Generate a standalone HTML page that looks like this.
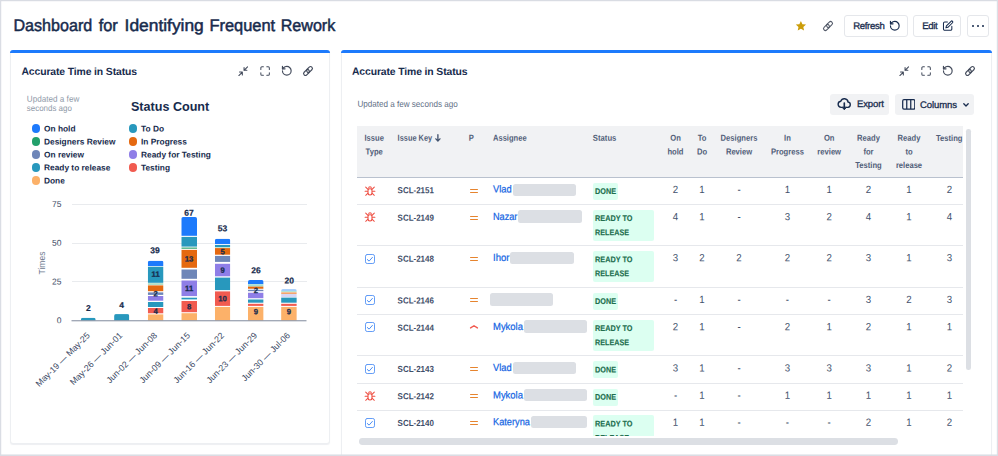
<!DOCTYPE html>
<html><head><meta charset="utf-8"><title>Dashboard for Identifying Frequent Rework</title>
<style>
html,body{margin:0;padding:0;background:#fff}
body{width:998px;height:456px;position:relative;overflow:hidden;font-family:"Liberation Sans",sans-serif}
.t{position:absolute;left:0;top:0;white-space:nowrap;display:block;transform-origin:0 0}
.tr{position:absolute;white-space:nowrap;display:block}
.r{position:absolute;display:block}
</style></head><body>
<span class="t" style="transform:translate(13.50px,15.01px) scale(0.9586,1) rotate(0.06deg);font-size:16.8px;line-height:22px;height:22px;color:#172b4d;-webkit-text-stroke:0.5px #172b4d;">Dashboard</span>
<span class="t" style="transform:translate(98.70px,15.04px) scale(0.9753,1) rotate(0.06deg);font-size:16.8px;line-height:22px;height:22px;color:#172b4d;-webkit-text-stroke:0.5px #172b4d;">for</span>
<span class="t" style="transform:translate(124.60px,15.00px) scale(1.0353,1) rotate(0.06deg);font-size:16.8px;line-height:22px;height:22px;color:#172b4d;-webkit-text-stroke:0.5px #172b4d;">Identifying</span>
<span class="t" style="transform:translate(209.50px,15.01px) scale(0.9782,1) rotate(0.06deg);font-size:16.8px;line-height:22px;height:22px;color:#172b4d;-webkit-text-stroke:0.5px #172b4d;">Frequent</span>
<span class="t" style="transform:translate(280.70px,15.02px) scale(0.9599,1) rotate(0.06deg);font-size:16.8px;line-height:22px;height:22px;color:#172b4d;-webkit-text-stroke:0.5px #172b4d;">Rework</span>
<svg class="r" style="left:794.90px;top:19.80px;" width="11.8" height="11.8" viewBox="0 0 24 24" fill="none"><path fill="#cb9d0a" d="M12 1.800l3.100 6.700 7.300.800-5.450 4.950 1.500 7.200L12 17.800l-6.450 3.650 1.500-7.200L1.600 9.300l7.300-.800z"/></svg>
<svg class="r" style="left:821.00px;top:18.60px;" width="14" height="14" viewBox="-7 -7 14 14" fill="none"><g stroke="#535a69" stroke-width="1.05" transform="scale(1.019) rotate(-45)"><rect x="-5.450" y="-1.850" width="6.700" height="3.700" rx="1.850"/><rect x="-1.250" y="-1.850" width="6.700" height="3.700" rx="1.850"/></g></svg>
<div class="r" style="left:844.4px;top:14.7px;width:63.6px;height:22px;box-sizing:border-box;border:1px solid #e5e7eb;border-radius:3px;background:#fff"></div>
<span class="t" style="transform:translate(853.20px,20.04px) rotate(0.06deg);font-size:9.6px;line-height:12px;height:12px;color:#172b4d;letter-spacing:-0.332px;-webkit-text-stroke:0.3px #172b4d;">Refresh</span>
<svg class="r" style="left:888.90px;top:19.90px;" width="11.6" height="11.6" viewBox="0 0 24 24" fill="none"><g stroke="#172b4d" stroke-width="2.4" stroke-linecap="round" stroke-linejoin="round"><path d="M3 12a9 9 0 1 0 9-9 9.750 9.750 0 0 0-6.740 2.740L3 8"/><path d="M3 2.600v5.400h5.400"/></g></svg>
<div class="r" style="left:913.1px;top:14.7px;width:48.4px;height:22px;box-sizing:border-box;border:1px solid #e5e7eb;border-radius:3px;background:#fff"></div>
<span class="t" style="transform:translate(922.30px,20.05px) rotate(0.06deg);font-size:9.6px;line-height:12px;height:12px;color:#172b4d;letter-spacing:-0.344px;-webkit-text-stroke:0.3px #172b4d;">Edit</span>
<svg class="r" style="left:941.90px;top:19.60px;" width="11.8" height="11.8" viewBox="0 0 24 24" fill="none"><g stroke="#172b4d" stroke-width="2.1" stroke-linecap="round" stroke-linejoin="round"><path d="M11 4H5.500A2.500 2.500 0 0 0 3 6.500v12A2.500 2.500 0 0 0 5.500 21h12a2.500 2.500 0 0 0 2.500-2.500V13"/><path d="M18.400 2.600a2.100 2.100 0 0 1 3 3L12 15l-4 1 1-4z"/></g></svg>
<div class="r" style="left:967.3px;top:14.7px;width:21.8px;height:22px;box-sizing:border-box;border:1px solid #e5e7eb;border-radius:3px;background:#fff"></div>
<div class="r" style="left:971.85px;top:24.85px;width:1.90px;height:1.90px;background:#172b4d;border-radius:50%"></div>
<div class="r" style="left:976.90px;top:24.85px;width:1.90px;height:1.90px;background:#172b4d;border-radius:50%"></div>
<div class="r" style="left:981.95px;top:24.85px;width:1.90px;height:1.90px;background:#172b4d;border-radius:50%"></div>
<div class="r" style="left:10px;top:50px;width:320.4px;height:394px;border:1px solid #edeff2;border-radius:3px;box-sizing:border-box;background:#fff;box-shadow:0 1px 1px rgba(9,30,66,.07)"></div>
<div class="r" style="left:10px;top:50px;width:320.4px;height:2.8px;background:#1d7afc;border-radius:3px 3px 0 0"></div>
<div class="r" style="left:340.7px;top:50px;width:651.6px;height:420px;border:1px solid #edeff2;border-radius:3px;box-sizing:border-box;background:#fff;box-shadow:0 1px 1px rgba(9,30,66,.07)"></div>
<div class="r" style="left:340.7px;top:50px;width:651.6px;height:2.8px;background:#1d7afc;border-radius:3px 3px 0 0"></div>
<span class="t" style="transform:translate(21.50px,64.86px) rotate(0.06deg);font-size:10.4px;line-height:14px;height:14px;color:#172b4d;font-weight:bold;letter-spacing:-0.122px;">Accurate Time in Status</span>
<span class="t" style="transform:translate(352.00px,64.86px) rotate(0.06deg);font-size:10.4px;line-height:14px;height:14px;color:#172b4d;font-weight:bold;letter-spacing:-0.122px;">Accurate Time in Status</span>
<svg class="r" style="left:237.80px;top:65.60px;" width="10.4" height="10.4" viewBox="0 0 24 24" fill="none"><g stroke="#434b5c" stroke-width="2.5" stroke-linecap="round" stroke-linejoin="round"><path d="M22 2l-8 8M14 3.5V10h6.5"/><path d="M2 22l8-8M3.500 14H10v6.5"/></g></svg>
<svg class="r" style="left:259.70px;top:65.70px;" width="10.2" height="10.2" viewBox="0 0 24 24" fill="none"><g stroke="#434b5c" stroke-width="2.4" stroke-linecap="round" stroke-linejoin="round"><path d="M2 8V4.500A2.500 2.500 0 0 1 4.500 2H8"/><path d="M16 2h3.500A2.500 2.500 0 0 1 22 4.500V8"/><path d="M22 16v3.500A2.500 2.500 0 0 1 19.500 22H16"/><path d="M8 22H4.500A2.500 2.500 0 0 1 2 19.500V16"/></g></svg>
<svg class="r" style="left:280.70px;top:64.90px;" width="11.6" height="11.6" viewBox="0 0 24 24" fill="none"><g stroke="#434b5c" stroke-width="2.4" stroke-linecap="round" stroke-linejoin="round"><path d="M3 12a9 9 0 1 0 9-9 9.750 9.750 0 0 0-6.740 2.740L3 8"/><path d="M3 2.600v5.400h5.400"/></g></svg>
<svg class="r" style="left:301.30px;top:63.80px;" width="14" height="14" viewBox="-7 -7 14 14" fill="none"><g stroke="#434b5c" stroke-width="1.15" transform="scale(1.000) rotate(-45)"><rect x="-5.450" y="-1.850" width="6.700" height="3.700" rx="1.850"/><rect x="-1.250" y="-1.850" width="6.700" height="3.700" rx="1.850"/></g></svg>
<svg class="r" style="left:899.20px;top:65.60px;" width="10.4" height="10.4" viewBox="0 0 24 24" fill="none"><g stroke="#434b5c" stroke-width="2.5" stroke-linecap="round" stroke-linejoin="round"><path d="M22 2l-8 8M14 3.5V10h6.5"/><path d="M2 22l8-8M3.500 14H10v6.5"/></g></svg>
<svg class="r" style="left:921.10px;top:65.70px;" width="10.2" height="10.2" viewBox="0 0 24 24" fill="none"><g stroke="#434b5c" stroke-width="2.4" stroke-linecap="round" stroke-linejoin="round"><path d="M2 8V4.500A2.500 2.500 0 0 1 4.500 2H8"/><path d="M16 2h3.500A2.500 2.500 0 0 1 22 4.500V8"/><path d="M22 16v3.500A2.500 2.500 0 0 1 19.500 22H16"/><path d="M8 22H4.500A2.500 2.500 0 0 1 2 19.500V16"/></g></svg>
<svg class="r" style="left:942.10px;top:64.90px;" width="11.6" height="11.6" viewBox="0 0 24 24" fill="none"><g stroke="#434b5c" stroke-width="2.4" stroke-linecap="round" stroke-linejoin="round"><path d="M3 12a9 9 0 1 0 9-9 9.750 9.750 0 0 0-6.740 2.740L3 8"/><path d="M3 2.600v5.400h5.400"/></g></svg>
<svg class="r" style="left:962.70px;top:63.80px;" width="14" height="14" viewBox="-7 -7 14 14" fill="none"><g stroke="#434b5c" stroke-width="1.15" transform="scale(1.000) rotate(-45)"><rect x="-5.450" y="-1.850" width="6.700" height="3.700" rx="1.850"/><rect x="-1.250" y="-1.850" width="6.700" height="3.700" rx="1.850"/></g></svg>
<span class="t" style="transform:translate(26.80px,93.67px) scale(0.9473,1) rotate(0.06deg);font-size:8.6px;line-height:11px;height:11px;color:#8f99a8;">Updated a few</span>
<span class="t" style="transform:translate(26.80px,102.88px) scale(0.9234,1) rotate(0.06deg);font-size:8.6px;line-height:11px;height:11px;color:#8f99a8;">seconds ago</span>
<span class="t" style="transform:translate(131.00px,98.65px) rotate(0.06deg);font-size:12.6px;line-height:16px;height:16px;color:#172b4d;font-weight:bold;letter-spacing:-0.014px;">Status Count</span>
<div class="r" style="left:31.60px;top:124.20px;width:8.80px;height:8.80px;background:#1d7afc;border-radius:50%"></div>
<span class="t" style="transform:translate(44.00px,123.48px) rotate(0.06deg);font-size:8.35px;line-height:11px;height:11px;color:#172b4d;font-weight:bold;">On hold</span>
<div class="r" style="left:31.60px;top:137.20px;width:8.80px;height:8.80px;background:#22a06b;border-radius:50%"></div>
<span class="t" style="transform:translate(44.00px,136.46px) rotate(0.06deg);font-size:8.35px;line-height:11px;height:11px;color:#172b4d;font-weight:bold;">Designers Review</span>
<div class="r" style="left:31.60px;top:150.20px;width:8.80px;height:8.80px;background:#6e86b8;border-radius:50%"></div>
<span class="t" style="transform:translate(44.00px,149.47px) rotate(0.06deg);font-size:8.35px;line-height:11px;height:11px;color:#172b4d;font-weight:bold;">On review</span>
<div class="r" style="left:31.60px;top:163.10px;width:8.80px;height:8.80px;background:#2898bd;border-radius:50%"></div>
<span class="t" style="transform:translate(44.00px,162.36px) rotate(0.06deg);font-size:8.35px;line-height:11px;height:11px;color:#172b4d;font-weight:bold;">Ready to release</span>
<div class="r" style="left:31.60px;top:176.10px;width:8.80px;height:8.80px;background:#fcb169;border-radius:50%"></div>
<span class="t" style="transform:translate(44.00px,175.38px) rotate(0.06deg);font-size:8.35px;line-height:11px;height:11px;color:#172b4d;font-weight:bold;">Done</span>
<div class="r" style="left:128.60px;top:124.20px;width:8.80px;height:8.80px;background:#2898bd;border-radius:50%"></div>
<span class="t" style="transform:translate(141.00px,123.48px) rotate(0.06deg);font-size:8.35px;line-height:11px;height:11px;color:#172b4d;font-weight:bold;">To Do</span>
<div class="r" style="left:128.60px;top:137.20px;width:8.80px;height:8.80px;background:#e56910;border-radius:50%"></div>
<span class="t" style="transform:translate(141.00px,136.47px) rotate(0.06deg);font-size:8.35px;line-height:11px;height:11px;color:#172b4d;font-weight:bold;">In Progress</span>
<div class="r" style="left:128.60px;top:150.20px;width:8.80px;height:8.80px;background:#8f7ee7;border-radius:50%"></div>
<span class="t" style="transform:translate(141.00px,149.46px) rotate(0.06deg);font-size:8.35px;line-height:11px;height:11px;color:#172b4d;font-weight:bold;">Ready for Testing</span>
<div class="r" style="left:128.60px;top:163.10px;width:8.80px;height:8.80px;background:#f15b50;border-radius:50%"></div>
<span class="t" style="transform:translate(141.00px,162.38px) rotate(0.06deg);font-size:8.35px;line-height:11px;height:11px;color:#172b4d;font-weight:bold;">Testing</span>
<div class="r" style="left:71.50px;top:204.00px;width:235.00px;height:1.00px;background:#e9ebee;"></div>
<div class="r" style="left:71.50px;top:242.70px;width:235.00px;height:1.00px;background:#e9ebee;"></div>
<div class="r" style="left:71.50px;top:281.40px;width:235.00px;height:1.00px;background:#e9ebee;"></div>
<span class="t" style="transform:translate(52.00px,199.03px) rotate(0.06deg);font-size:8.5px;line-height:11px;height:11px;color:#3d4b66;">75</span>
<span class="t" style="transform:translate(52.00px,237.73px) rotate(0.06deg);font-size:8.5px;line-height:11px;height:11px;color:#3d4b66;">50</span>
<span class="t" style="transform:translate(52.00px,276.43px) rotate(0.06deg);font-size:8.5px;line-height:11px;height:11px;color:#3d4b66;">25</span>
<span class="t" style="transform:translate(56.72px,315.13px) rotate(0.06deg);font-size:8.5px;line-height:11px;height:11px;color:#3d4b66;">0</span>
<span class="tr" style="left:42.3px;top:262.5px;transform-origin:50% 50%;font-size:8.5px;line-height:10px;color:#6f7b90;transform:translate(-50%,-50%) rotate(-90deg)">Times</span>
<svg class="r" style="left:0;top:0" width="340" height="456" viewBox="0 0 340 456"><clipPath id="cb0"><rect x="80.9" y="317.7" width="14.80" height="12.30" rx="1.800"/></clipPath><g clip-path="url(#cb0)"><rect x="80.9" y="317.7" width="14.80" height="2.90" fill="#2898bd"/></g><clipPath id="cb1"><rect x="114.1" y="314.1" width="15.20" height="15.90" rx="1.800"/></clipPath><g clip-path="url(#cb1)"><rect x="114.1" y="314.1" width="15.20" height="6.50" fill="#2898bd"/></g><clipPath id="cb2"><rect x="147.8" y="260.7" width="15.70" height="69.30" rx="1.800"/></clipPath><g clip-path="url(#cb2)"><rect x="147.8" y="260.7" width="15.70" height="5.30" fill="#1d7afc"/><rect x="147.8" y="266.7" width="15.70" height="16.10" fill="#2898bd"/><rect x="147.8" y="283.2" width="15.70" height="1.70" fill="#a9dcc3"/><rect x="147.8" y="285.4" width="15.70" height="5.80" fill="#e56910"/><rect x="147.8" y="292.4" width="15.70" height="2.50" fill="#6e86b8"/><rect x="147.8" y="296.0" width="15.70" height="4.70" fill="#8f7ee7"/><rect x="147.8" y="302.0" width="15.70" height="5.00" fill="#2898bd"/><rect x="147.8" y="308.0" width="15.70" height="5.30" fill="#f15b50"/><rect x="147.8" y="314.4" width="15.70" height="6.20" fill="#fcb169"/></g><clipPath id="cb3"><rect x="181.3" y="217.0" width="15.70" height="113.00" rx="1.800"/></clipPath><g clip-path="url(#cb3)"><rect x="181.3" y="217.0" width="15.70" height="18.80" fill="#1d7afc"/><rect x="181.3" y="236.9" width="15.70" height="9.70" fill="#2898bd"/><rect x="181.3" y="247.5" width="15.70" height="1.30" fill="#3dab7c"/><rect x="181.3" y="249.9" width="15.70" height="17.90" fill="#e56910"/><rect x="181.3" y="269.5" width="15.70" height="9.30" fill="#6e86b8"/><rect x="181.3" y="280.5" width="15.70" height="15.60" fill="#8f7ee7"/><rect x="181.3" y="297.7" width="15.70" height="1.70" fill="#2898bd"/><rect x="181.3" y="301.0" width="15.70" height="11.20" fill="#f15b50"/><rect x="181.3" y="313.2" width="15.70" height="7.40" fill="#fcb169"/></g><clipPath id="cb4"><rect x="214.9" y="238.7" width="15.40" height="91.30" rx="1.800"/></clipPath><g clip-path="url(#cb4)"><rect x="214.9" y="238.7" width="15.40" height="5.40" fill="#1d7afc"/><rect x="214.9" y="245.0" width="15.40" height="2.00" fill="#2898bd"/><rect x="214.9" y="247.2" width="15.40" height="0.70" fill="#a9dcc3"/><rect x="214.9" y="248.1" width="15.40" height="6.60" fill="#e56910"/><rect x="214.9" y="255.9" width="15.40" height="6.00" fill="#6e86b8"/><rect x="214.9" y="263.8" width="15.40" height="12.50" fill="#8f7ee7"/><rect x="214.9" y="277.6" width="15.40" height="12.50" fill="#2898bd"/><rect x="214.9" y="291.4" width="15.40" height="14.50" fill="#f15b50"/><rect x="214.9" y="306.9" width="15.40" height="13.70" fill="#fcb169"/></g><clipPath id="cb5"><rect x="248.0" y="280.0" width="15.60" height="50.00" rx="1.800"/></clipPath><g clip-path="url(#cb5)"><rect x="248.0" y="280.0" width="15.60" height="4.20" fill="#1d7afc"/><rect x="248.0" y="284.3" width="15.60" height="2.30" fill="#a6e0d0"/><rect x="248.0" y="286.6" width="15.60" height="2.20" fill="#e56910"/><rect x="248.0" y="288.9" width="15.60" height="1.00" fill="#dfe4ee"/><rect x="248.0" y="290.0" width="15.60" height="1.10" fill="#6e86b8"/><rect x="248.0" y="291.2" width="15.60" height="1.50" fill="#e4e2f7"/><rect x="248.0" y="292.9" width="15.60" height="5.30" fill="#8f7ee7"/><rect x="248.0" y="299.5" width="15.60" height="3.20" fill="#2898bd"/><rect x="248.0" y="303.8" width="15.60" height="2.10" fill="#f15b50"/><rect x="248.0" y="306.9" width="15.60" height="13.70" fill="#fcb169"/></g><clipPath id="cb6"><rect x="281.1" y="289.1" width="15.70" height="40.90" rx="1.800"/></clipPath><g clip-path="url(#cb6)"><rect x="281.1" y="289.1" width="15.70" height="1.90" fill="#a3cdfb"/><rect x="281.1" y="291.0" width="15.70" height="1.10" fill="#b6e3d4"/><rect x="281.1" y="292.3" width="15.70" height="1.70" fill="#f3a56e"/><rect x="281.1" y="294.0" width="15.70" height="3.00" fill="#d8d6f5"/><rect x="281.1" y="297.6" width="15.70" height="5.10" fill="#2898bd"/><rect x="281.1" y="303.8" width="15.70" height="2.10" fill="#f15b50"/><rect x="281.1" y="306.9" width="15.70" height="13.70" fill="#fcb169"/></g><rect x="71.500" y="320.200" width="235" height="1.100" fill="#8c95a6"/></svg>
<span class="t" style="transform:translate(85.94px,302.09px) rotate(0.06deg);font-size:8.5px;line-height:12px;height:12px;color:#172b4d;font-weight:bold;-webkit-text-stroke:0.2px #172b4d;">2</span>
<span class="t" style="transform:translate(119.34px,298.89px) rotate(0.06deg);font-size:8.5px;line-height:12px;height:12px;color:#172b4d;font-weight:bold;-webkit-text-stroke:0.2px #172b4d;">4</span>
<span class="t" style="transform:translate(150.17px,244.19px) rotate(0.06deg);font-size:8.5px;line-height:12px;height:12px;color:#172b4d;font-weight:bold;-webkit-text-stroke:0.2px #172b4d;">39</span>
<span class="t" style="transform:translate(184.37px,206.69px) rotate(0.06deg);font-size:8.5px;line-height:12px;height:12px;color:#172b4d;font-weight:bold;-webkit-text-stroke:0.2px #172b4d;">67</span>
<span class="t" style="transform:translate(217.87px,222.34px) rotate(0.06deg);font-size:8.5px;line-height:12px;height:12px;color:#172b4d;font-weight:bold;-webkit-text-stroke:0.2px #172b4d;">53</span>
<span class="t" style="transform:translate(251.27px,264.34px) rotate(0.06deg);font-size:8.5px;line-height:12px;height:12px;color:#172b4d;font-weight:bold;-webkit-text-stroke:0.2px #172b4d;">26</span>
<span class="t" style="transform:translate(284.52px,274.39px) rotate(0.06deg);font-size:8.5px;line-height:12px;height:12px;color:#172b4d;font-weight:bold;-webkit-text-stroke:0.2px #172b4d;">20</span>
<span class="t" style="transform:translate(151.54px,269.63px) rotate(0.06deg);font-size:7.7px;line-height:10px;height:10px;color:#172b4d;font-weight:bold;-webkit-text-stroke:0.25px #172b4d;">11</span>
<span class="t" style="transform:translate(153.56px,289.23px) rotate(0.06deg);font-size:7.7px;line-height:10px;height:10px;color:#172b4d;font-weight:bold;-webkit-text-stroke:0.25px #172b4d;">2</span>
<span class="t" style="transform:translate(153.56px,306.83px) rotate(0.06deg);font-size:7.7px;line-height:10px;height:10px;color:#172b4d;font-weight:bold;-webkit-text-stroke:0.25px #172b4d;">4</span>
<span class="t" style="transform:translate(184.82px,254.43px) rotate(0.06deg);font-size:7.7px;line-height:10px;height:10px;color:#172b4d;font-weight:bold;-webkit-text-stroke:0.25px #172b4d;">13</span>
<span class="t" style="transform:translate(185.04px,283.93px) rotate(0.06deg);font-size:7.7px;line-height:10px;height:10px;color:#172b4d;font-weight:bold;-webkit-text-stroke:0.25px #172b4d;">11</span>
<span class="t" style="transform:translate(186.96px,302.23px) rotate(0.06deg);font-size:7.7px;line-height:10px;height:10px;color:#172b4d;font-weight:bold;-webkit-text-stroke:0.25px #172b4d;">8</span>
<span class="t" style="transform:translate(220.46px,247.13px) rotate(0.06deg);font-size:7.7px;line-height:10px;height:10px;color:#172b4d;font-weight:bold;-webkit-text-stroke:0.25px #172b4d;">5</span>
<span class="t" style="transform:translate(220.46px,265.63px) rotate(0.06deg);font-size:7.7px;line-height:10px;height:10px;color:#172b4d;font-weight:bold;-webkit-text-stroke:0.25px #172b4d;">9</span>
<span class="t" style="transform:translate(218.32px,294.23px) rotate(0.06deg);font-size:7.7px;line-height:10px;height:10px;color:#172b4d;font-weight:bold;-webkit-text-stroke:0.25px #172b4d;">10</span>
<span class="t" style="transform:translate(253.66px,285.93px) rotate(0.06deg);font-size:7.7px;line-height:10px;height:10px;color:#172b4d;font-weight:bold;-webkit-text-stroke:0.25px #172b4d;">2</span>
<span class="t" style="transform:translate(253.76px,307.13px) rotate(0.06deg);font-size:7.7px;line-height:10px;height:10px;color:#172b4d;font-weight:bold;-webkit-text-stroke:0.25px #172b4d;">9</span>
<span class="t" style="transform:translate(286.86px,307.13px) rotate(0.06deg);font-size:7.7px;line-height:10px;height:10px;color:#172b4d;font-weight:bold;-webkit-text-stroke:0.25px #172b4d;">9</span>
<span class="tr" style="right:910.10px;top:328.50px;font-size:8.8px;line-height:10px;color:#3d4b66;transform-origin:100% 50%;transform:rotate(-45deg)">May-19 — May-25</span>
<span class="tr" style="right:876.70px;top:328.50px;font-size:8.8px;line-height:10px;color:#3d4b66;transform-origin:100% 50%;transform:rotate(-45deg)">May-26 — Jun-01</span>
<span class="tr" style="right:842.80px;top:328.50px;font-size:8.8px;line-height:10px;color:#3d4b66;transform-origin:100% 50%;transform:rotate(-45deg)">Jun-02 — Jun-08</span>
<span class="tr" style="right:809.30px;top:328.50px;font-size:8.8px;line-height:10px;color:#3d4b66;transform-origin:100% 50%;transform:rotate(-45deg)">Jun-09 — Jun-15</span>
<span class="tr" style="right:775.80px;top:328.50px;font-size:8.8px;line-height:10px;color:#3d4b66;transform-origin:100% 50%;transform:rotate(-45deg)">Jun-16 — Jun-22</span>
<span class="tr" style="right:742.50px;top:328.50px;font-size:8.8px;line-height:10px;color:#3d4b66;transform-origin:100% 50%;transform:rotate(-45deg)">Jun-23 — Jun-29</span>
<span class="tr" style="right:709.40px;top:328.50px;font-size:8.8px;line-height:10px;color:#3d4b66;transform-origin:100% 50%;transform:rotate(-45deg)">Jun-30 — Jul-06</span>
<span class="t" style="transform:translate(357.40px,98.85px) scale(0.9197,1) rotate(0.06deg);font-size:8.8px;line-height:11px;height:11px;color:#626f86;">Updated a few seconds ago</span>
<div class="r" style="left:829.80px;top:93.90px;width:59.60px;height:21.40px;background:#f1f2f4;border-radius:3px"></div>
<div class="r" style="left:895.20px;top:93.90px;width:78.90px;height:21.40px;background:#f1f2f4;border-radius:3px"></div>
<svg class="r" style="left:836.60px;top:97.30px;" width="14.6" height="14.6" viewBox="0 0 24 24" fill="none"><g stroke="#172b4d" stroke-width="2.300" stroke-linecap="round" stroke-linejoin="round"><path d="M8.300 17H7A5 5 0 0 1 6.200 7.050 6.200 6.200 0 0 1 18.200 8.300 4.400 4.400 0 0 1 18 17h-2.300"/><path d="M12 9.800v8.700" stroke-width="2.700"/><path d="M8.700 17.200L12 21l3.300-3.800z" fill="#172b4d" stroke-width="1.600"/></g></svg>
<span class="t" style="transform:translate(856.90px,98.04px) rotate(0.06deg);font-size:9.5px;line-height:12px;height:12px;color:#172b4d;letter-spacing:-0.091px;-webkit-text-stroke:0.3px #172b4d;">Export</span>
<svg class="r" style="left:901.70px;top:99.00px;" width="13.5" height="10.8" viewBox="0 0 27 21.600" fill="none"><g stroke="#172b4d" stroke-width="2.500" stroke-linejoin="round"><rect x="1.400" y="1.400" width="24.200" height="18.800" rx="2.500"/><path d="M9.500 1.400v18.800M17.500 1.400v18.800"/></g></svg>
<span class="t" style="transform:translate(920.00px,98.94px) rotate(0.06deg);font-size:9.5px;line-height:12px;height:12px;color:#172b4d;letter-spacing:-0.081px;-webkit-text-stroke:0.3px #172b4d;">Columns</span>
<svg class="r" style="left:963.00px;top:102.70px;" width="6.0" height="3.9" viewBox="0 0 12 7.800" fill="none"><path d="M1.600 1.600L6 6l4.400-4.400" stroke="#172b4d" stroke-width="2.600" stroke-linecap="round" stroke-linejoin="round"/></svg>
<div class="r" style="left:357.20px;top:126.30px;width:606.00px;height:51.00px;background:#f1f2f4;"></div>
<div class="r" style="left:357.20px;top:176.95px;width:606.00px;height:1.20px;background:#b9c1ce;"></div>
<span class="t" style="transform:translate(364.48px,132.79px) scale(0.8850,1) rotate(0.06deg);font-size:8.6px;line-height:11px;height:11px;color:#526079;font-weight:bold;">Issue</span>
<span class="t" style="transform:translate(365.61px,146.44px) scale(0.8850,1) rotate(0.06deg);font-size:8.6px;line-height:11px;height:11px;color:#526079;font-weight:bold;">Type</span>
<span class="t" style="transform:translate(397.60px,132.78px) scale(0.8622,1) rotate(0.06deg);font-size:8.6px;line-height:11px;height:11px;color:#526079;font-weight:bold;">Issue Key</span>
<svg class="r" style="left:435.30px;top:134.10px;" width="5.8" height="8" viewBox="0 0 11.600 16" fill="none"><path d="M5.800 1.500v12.400M1.700 9.700l4.100 4.200 4.100-4.200" stroke="#44546f" stroke-width="2.700" stroke-linecap="round" stroke-linejoin="round"/></svg>
<span class="t" style="transform:translate(468.70px,132.80px) scale(0.8850,1) rotate(0.06deg);font-size:8.6px;line-height:11px;height:11px;color:#526079;font-weight:bold;">P</span>
<span class="t" style="transform:translate(493.00px,132.78px) scale(0.8793,1) rotate(0.06deg);font-size:8.6px;line-height:11px;height:11px;color:#526079;font-weight:bold;">Assignee</span>
<span class="t" style="transform:translate(592.80px,132.79px) scale(0.8986,1) rotate(0.06deg);font-size:8.6px;line-height:11px;height:11px;color:#526079;font-weight:bold;">Status</span>
<span class="t" style="transform:translate(670.22px,132.79px) scale(0.8850,1) rotate(0.06deg);font-size:8.6px;line-height:11px;height:11px;color:#526079;font-weight:bold;">On</span>
<span class="t" style="transform:translate(667.47px,146.44px) scale(0.8850,1) rotate(0.06deg);font-size:8.6px;line-height:11px;height:11px;color:#526079;font-weight:bold;">hold</span>
<span class="t" style="transform:translate(697.64px,132.80px) scale(0.8850,1) rotate(0.06deg);font-size:8.6px;line-height:11px;height:11px;color:#526079;font-weight:bold;">To</span>
<span class="t" style="transform:translate(696.93px,146.44px) scale(0.8850,1) rotate(0.06deg);font-size:8.6px;line-height:11px;height:11px;color:#526079;font-weight:bold;">Do</span>
<span class="t" style="transform:translate(720.61px,132.78px) scale(0.8850,1) rotate(0.06deg);font-size:8.6px;line-height:11px;height:11px;color:#526079;font-weight:bold;">Designers</span>
<span class="t" style="transform:translate(725.89px,146.44px) scale(0.8850,1) rotate(0.06deg);font-size:8.6px;line-height:11px;height:11px;color:#526079;font-weight:bold;">Review</span>
<span class="t" style="transform:translate(784.02px,132.80px) scale(0.8850,1) rotate(0.06deg);font-size:8.6px;line-height:11px;height:11px;color:#526079;font-weight:bold;">In</span>
<span class="t" style="transform:translate(770.91px,146.43px) scale(0.8850,1) rotate(0.06deg);font-size:8.6px;line-height:11px;height:11px;color:#526079;font-weight:bold;">Progress</span>
<span class="t" style="transform:translate(823.92px,132.79px) scale(0.8850,1) rotate(0.06deg);font-size:8.6px;line-height:11px;height:11px;color:#526079;font-weight:bold;">On</span>
<span class="t" style="transform:translate(817.36px,146.44px) scale(0.8850,1) rotate(0.06deg);font-size:8.6px;line-height:11px;height:11px;color:#526079;font-weight:bold;">review</span>
<span class="t" style="transform:translate(857.09px,132.79px) scale(0.8850,1) rotate(0.06deg);font-size:8.6px;line-height:11px;height:11px;color:#526079;font-weight:bold;">Ready</span>
<span class="t" style="transform:translate(863.43px,146.44px) scale(0.8850,1) rotate(0.06deg);font-size:8.6px;line-height:11px;height:11px;color:#526079;font-weight:bold;">for</span>
<span class="t" style="transform:translate(855.26px,160.09px) scale(0.8850,1) rotate(0.06deg);font-size:8.6px;line-height:11px;height:11px;color:#526079;font-weight:bold;">Testing</span>
<span class="t" style="transform:translate(897.59px,132.79px) scale(0.8850,1) rotate(0.06deg);font-size:8.6px;line-height:11px;height:11px;color:#526079;font-weight:bold;">Ready</span>
<span class="t" style="transform:translate(905.41px,146.45px) scale(0.8850,1) rotate(0.06deg);font-size:8.6px;line-height:11px;height:11px;color:#526079;font-weight:bold;">to</span>
<span class="t" style="transform:translate(895.89px,160.09px) scale(0.8850,1) rotate(0.06deg);font-size:8.6px;line-height:11px;height:11px;color:#526079;font-weight:bold;">release</span>
<div class="r" style="left:930px;top:126px;width:33.2px;height:51px;overflow:hidden"><span class="tr" style="left:5.9px;top:6.60px;font-size:8.6px;line-height:11px;font-weight:bold;color:#526079;transform-origin:0 0;transform:scale(0.885,1) rotate(0.06deg)">Testing</span></div>
<div class="r" style="left:0;top:177.5px;width:998px;height:258.6px;overflow:hidden"><div class="r" style="left:0;top:-177.5px;width:998px;height:456px">
<div class="r" style="left:357.20px;top:203.95px;width:606.00px;height:1.00px;background:#e6e8ec;"></div>
<svg class="r" style="left:363.85px;top:184.50px;" width="12" height="12" viewBox="-6 -6 12 12" fill="none"><g stroke="#ee4f43" stroke-width="1.050" stroke-linecap="round" fill="none"><rect x="-2" y="-2.300" width="4" height="6.300" rx="2"/><path d="M-1.350 -2.700a1.350 1.600 0 0 1 2.700 0"/><path d="M-2.400 0.300H-4.900M2.400 0.300H4.900M-2 -1.600L-4.300 -3.900M2 -1.600L4.300 -3.900M-2 2.200L-4.300 4.300M2 2.200L4.300 4.300"/></g></svg>
<span class="t" style="transform:translate(397.60px,185.33px) scale(0.9054,1) rotate(0.06deg);font-size:8.8px;line-height:11px;height:11px;color:#3f4e69;font-weight:bold;">SCL-2151</span>
<div class="r" style="left:469.60px;top:189.00px;width:8.50px;height:1.35px;background:#e6842f;border-radius:.5px"></div>
<div class="r" style="left:469.60px;top:192.00px;width:8.50px;height:1.35px;background:#e6842f;border-radius:.5px"></div>
<span class="t" style="transform:translate(493.00px,182.49px) scale(0.9025,1) rotate(0.06deg);font-size:10.3px;line-height:13px;height:13px;color:#1264e3;-webkit-text-stroke:0.22px #1264e3;">Vlad</span>
<div class="r" style="left:512.50px;top:183.50px;width:63.30px;height:12.50px;background:#dcdfe4;border-radius:2.500px"></div>
<div class="r" style="left:592.90px;top:182.70px;width:25.30px;height:17.10px;background:#dcfff1;border-radius:2px"></div>
<span class="t" style="transform:translate(595.00px,185.88px) scale(0.8679,1) rotate(0.06deg);font-size:8.4px;line-height:11px;height:11px;color:#216e4e;font-weight:bold;-webkit-text-stroke:0.15px #216e4e;">DONE</span>
<span class="t" style="transform:translate(672.81px,183.12px) scale(0.9300,1) rotate(0.06deg);font-size:10.4px;line-height:14px;height:14px;color:#42516c;">2</span>
<span class="t" style="transform:translate(699.31px,183.12px) scale(0.9300,1) rotate(0.06deg);font-size:10.4px;line-height:14px;height:14px;color:#42516c;">1</span>
<span class="t" style="transform:translate(737.39px,183.12px) scale(0.9300,1) rotate(0.06deg);font-size:10.4px;line-height:14px;height:14px;color:#42516c;">-</span>
<span class="t" style="transform:translate(784.71px,183.12px) scale(0.9300,1) rotate(0.06deg);font-size:10.4px;line-height:14px;height:14px;color:#42516c;">1</span>
<span class="t" style="transform:translate(826.51px,183.12px) scale(0.9300,1) rotate(0.06deg);font-size:10.4px;line-height:14px;height:14px;color:#42516c;">1</span>
<span class="t" style="transform:translate(865.81px,183.12px) scale(0.9300,1) rotate(0.06deg);font-size:10.4px;line-height:14px;height:14px;color:#42516c;">2</span>
<span class="t" style="transform:translate(906.31px,183.12px) scale(0.9300,1) rotate(0.06deg);font-size:10.4px;line-height:14px;height:14px;color:#42516c;">1</span>
<span class="t" style="transform:translate(946.71px,183.12px) scale(0.9300,1) rotate(0.06deg);font-size:10.4px;line-height:14px;height:14px;color:#42516c;">2</span>
<div class="r" style="left:357.20px;top:245.00px;width:606.00px;height:1.00px;background:#e6e8ec;"></div>
<svg class="r" style="left:363.85px;top:211.45px;" width="12" height="12" viewBox="-6 -6 12 12" fill="none"><g stroke="#ee4f43" stroke-width="1.050" stroke-linecap="round" fill="none"><rect x="-2" y="-2.300" width="4" height="6.300" rx="2"/><path d="M-1.350 -2.700a1.350 1.600 0 0 1 2.700 0"/><path d="M-2.400 0.300H-4.900M2.400 0.300H4.900M-2 -1.600L-4.300 -3.900M2 -1.600L4.300 -3.900M-2 2.200L-4.300 4.300M2 2.200L4.300 4.300"/></g></svg>
<span class="t" style="transform:translate(397.60px,212.73px) scale(0.9054,1) rotate(0.06deg);font-size:8.8px;line-height:11px;height:11px;color:#3f4e69;font-weight:bold;">SCL-2149</span>
<div class="r" style="left:469.60px;top:216.00px;width:8.50px;height:1.35px;background:#e6842f;border-radius:.5px"></div>
<div class="r" style="left:469.60px;top:219.00px;width:8.50px;height:1.35px;background:#e6842f;border-radius:.5px"></div>
<span class="t" style="transform:translate(493.00px,209.94px) scale(0.8883,1) rotate(0.06deg);font-size:10.3px;line-height:13px;height:13px;color:#1264e3;-webkit-text-stroke:0.22px #1264e3;">Nazar</span>
<div class="r" style="left:518.30px;top:210.45px;width:63.30px;height:12.50px;background:#dcdfe4;border-radius:2.500px"></div>
<div class="r" style="left:592.90px;top:209.55px;width:61.20px;height:31.35px;background:#dcfff1;border-radius:2px"></div>
<span class="t" style="transform:translate(595.00px,213.08px) scale(0.8719,1) rotate(0.06deg);font-size:8.4px;line-height:11px;height:11px;color:#216e4e;font-weight:bold;-webkit-text-stroke:0.15px #216e4e;">READY TO</span>
<span class="t" style="transform:translate(595.00px,227.28px) scale(0.8595,1) rotate(0.06deg);font-size:8.4px;line-height:11px;height:11px;color:#216e4e;font-weight:bold;-webkit-text-stroke:0.15px #216e4e;">RELEASE</span>
<span class="t" style="transform:translate(672.81px,210.32px) scale(0.9300,1) rotate(0.06deg);font-size:10.4px;line-height:14px;height:14px;color:#42516c;">4</span>
<span class="t" style="transform:translate(699.31px,210.32px) scale(0.9300,1) rotate(0.06deg);font-size:10.4px;line-height:14px;height:14px;color:#42516c;">1</span>
<span class="t" style="transform:translate(737.39px,210.32px) scale(0.9300,1) rotate(0.06deg);font-size:10.4px;line-height:14px;height:14px;color:#42516c;">-</span>
<span class="t" style="transform:translate(784.71px,210.32px) scale(0.9300,1) rotate(0.06deg);font-size:10.4px;line-height:14px;height:14px;color:#42516c;">3</span>
<span class="t" style="transform:translate(826.51px,210.32px) scale(0.9300,1) rotate(0.06deg);font-size:10.4px;line-height:14px;height:14px;color:#42516c;">2</span>
<span class="t" style="transform:translate(865.81px,210.32px) scale(0.9300,1) rotate(0.06deg);font-size:10.4px;line-height:14px;height:14px;color:#42516c;">4</span>
<span class="t" style="transform:translate(906.31px,210.32px) scale(0.9300,1) rotate(0.06deg);font-size:10.4px;line-height:14px;height:14px;color:#42516c;">1</span>
<span class="t" style="transform:translate(946.71px,210.32px) scale(0.9300,1) rotate(0.06deg);font-size:10.4px;line-height:14px;height:14px;color:#42516c;">4</span>
<div class="r" style="left:357.20px;top:286.75px;width:606.00px;height:1.00px;background:#e6e8ec;"></div>
<svg class="r" style="left:363.85px;top:252.50px;" width="12" height="12" viewBox="-6 -6 12 12" fill="none"><g stroke-linecap="round" stroke-linejoin="round" fill="none"><rect x="-4.500" y="-4.500" width="9" height="9" rx="1.700" stroke="#5c98f5" stroke-width="0.950" fill="#fff"/><path d="M-2.700 0.500l1.800 1.600L2.400 -1.600" stroke="#4288f2" stroke-width="0.950"/></g></svg>
<span class="t" style="transform:translate(397.60px,253.78px) scale(0.9054,1) rotate(0.06deg);font-size:8.8px;line-height:11px;height:11px;color:#3f4e69;font-weight:bold;">SCL-2148</span>
<div class="r" style="left:469.60px;top:257.00px;width:8.50px;height:1.35px;background:#e6842f;border-radius:.5px"></div>
<div class="r" style="left:469.60px;top:260.00px;width:8.50px;height:1.35px;background:#e6842f;border-radius:.5px"></div>
<span class="t" style="transform:translate(493.00px,250.99px) scale(0.9243,1) rotate(0.06deg);font-size:10.3px;line-height:13px;height:13px;color:#1264e3;-webkit-text-stroke:0.22px #1264e3;">Ihor</span>
<div class="r" style="left:510.30px;top:251.50px;width:63.30px;height:12.50px;background:#dcdfe4;border-radius:2.500px"></div>
<div class="r" style="left:592.90px;top:250.60px;width:61.20px;height:31.35px;background:#dcfff1;border-radius:2px"></div>
<span class="t" style="transform:translate(595.00px,254.13px) scale(0.8719,1) rotate(0.06deg);font-size:8.4px;line-height:11px;height:11px;color:#216e4e;font-weight:bold;-webkit-text-stroke:0.15px #216e4e;">READY TO</span>
<span class="t" style="transform:translate(595.00px,268.33px) scale(0.8595,1) rotate(0.06deg);font-size:8.4px;line-height:11px;height:11px;color:#216e4e;font-weight:bold;-webkit-text-stroke:0.15px #216e4e;">RELEASE</span>
<span class="t" style="transform:translate(672.81px,251.37px) scale(0.9300,1) rotate(0.06deg);font-size:10.4px;line-height:14px;height:14px;color:#42516c;">3</span>
<span class="t" style="transform:translate(699.31px,251.37px) scale(0.9300,1) rotate(0.06deg);font-size:10.4px;line-height:14px;height:14px;color:#42516c;">2</span>
<span class="t" style="transform:translate(736.31px,251.37px) scale(0.9300,1) rotate(0.06deg);font-size:10.4px;line-height:14px;height:14px;color:#42516c;">2</span>
<span class="t" style="transform:translate(784.71px,251.37px) scale(0.9300,1) rotate(0.06deg);font-size:10.4px;line-height:14px;height:14px;color:#42516c;">2</span>
<span class="t" style="transform:translate(826.51px,251.37px) scale(0.9300,1) rotate(0.06deg);font-size:10.4px;line-height:14px;height:14px;color:#42516c;">2</span>
<span class="t" style="transform:translate(865.81px,251.37px) scale(0.9300,1) rotate(0.06deg);font-size:10.4px;line-height:14px;height:14px;color:#42516c;">3</span>
<span class="t" style="transform:translate(906.31px,251.37px) scale(0.9300,1) rotate(0.06deg);font-size:10.4px;line-height:14px;height:14px;color:#42516c;">1</span>
<span class="t" style="transform:translate(946.71px,251.37px) scale(0.9300,1) rotate(0.06deg);font-size:10.4px;line-height:14px;height:14px;color:#42516c;">3</span>
<div class="r" style="left:357.20px;top:313.95px;width:606.00px;height:1.00px;background:#e6e8ec;"></div>
<svg class="r" style="left:363.85px;top:294.25px;" width="12" height="12" viewBox="-6 -6 12 12" fill="none"><g stroke-linecap="round" stroke-linejoin="round" fill="none"><rect x="-4.500" y="-4.500" width="9" height="9" rx="1.700" stroke="#5c98f5" stroke-width="0.950" fill="#fff"/><path d="M-2.700 0.500l1.800 1.600L2.400 -1.600" stroke="#4288f2" stroke-width="0.950"/></g></svg>
<span class="t" style="transform:translate(397.60px,295.53px) scale(0.9054,1) rotate(0.06deg);font-size:8.8px;line-height:11px;height:11px;color:#3f4e69;font-weight:bold;">SCL-2146</span>
<div class="r" style="left:469.60px;top:298.00px;width:8.50px;height:1.35px;background:#e6842f;border-radius:.5px"></div>
<div class="r" style="left:469.60px;top:301.00px;width:8.50px;height:1.35px;background:#e6842f;border-radius:.5px"></div>
<div class="r" style="left:490.00px;top:293.25px;width:63.30px;height:12.50px;background:#dcdfe4;border-radius:2.500px"></div>
<div class="r" style="left:592.90px;top:292.85px;width:25.30px;height:17.10px;background:#dcfff1;border-radius:2px"></div>
<span class="t" style="transform:translate(595.00px,296.03px) scale(0.8679,1) rotate(0.06deg);font-size:8.4px;line-height:11px;height:11px;color:#216e4e;font-weight:bold;-webkit-text-stroke:0.15px #216e4e;">DONE</span>
<span class="t" style="transform:translate(673.89px,293.12px) scale(0.9300,1) rotate(0.06deg);font-size:10.4px;line-height:14px;height:14px;color:#42516c;">-</span>
<span class="t" style="transform:translate(699.31px,293.12px) scale(0.9300,1) rotate(0.06deg);font-size:10.4px;line-height:14px;height:14px;color:#42516c;">1</span>
<span class="t" style="transform:translate(737.39px,293.12px) scale(0.9300,1) rotate(0.06deg);font-size:10.4px;line-height:14px;height:14px;color:#42516c;">-</span>
<span class="t" style="transform:translate(785.79px,293.12px) scale(0.9300,1) rotate(0.06deg);font-size:10.4px;line-height:14px;height:14px;color:#42516c;">-</span>
<span class="t" style="transform:translate(827.59px,293.12px) scale(0.9300,1) rotate(0.06deg);font-size:10.4px;line-height:14px;height:14px;color:#42516c;">-</span>
<span class="t" style="transform:translate(865.81px,293.12px) scale(0.9300,1) rotate(0.06deg);font-size:10.4px;line-height:14px;height:14px;color:#42516c;">3</span>
<span class="t" style="transform:translate(906.31px,293.12px) scale(0.9300,1) rotate(0.06deg);font-size:10.4px;line-height:14px;height:14px;color:#42516c;">2</span>
<span class="t" style="transform:translate(946.71px,293.12px) scale(0.9300,1) rotate(0.06deg);font-size:10.4px;line-height:14px;height:14px;color:#42516c;">3</span>
<div class="r" style="left:357.20px;top:355.10px;width:606.00px;height:1.00px;background:#e6e8ec;"></div>
<svg class="r" style="left:363.85px;top:321.45px;" width="12" height="12" viewBox="-6 -6 12 12" fill="none"><g stroke-linecap="round" stroke-linejoin="round" fill="none"><rect x="-4.500" y="-4.500" width="9" height="9" rx="1.700" stroke="#5c98f5" stroke-width="0.950" fill="#fff"/><path d="M-2.700 0.500l1.800 1.600L2.400 -1.600" stroke="#4288f2" stroke-width="0.950"/></g></svg>
<span class="t" style="transform:translate(397.60px,322.73px) scale(0.9054,1) rotate(0.06deg);font-size:8.8px;line-height:11px;height:11px;color:#3f4e69;font-weight:bold;">SCL-2144</span>
<svg class="r" style="left:468.00px;top:322.45px;" width="12" height="10" viewBox="0 0 12 10" fill="none"><path d="M2.600 5.950L6 3.750l3.400 2.200" stroke="#f15b50" stroke-width="1.450" stroke-linecap="round" stroke-linejoin="round" fill="none"/></svg>
<span class="t" style="transform:translate(493.00px,319.93px) scale(0.9198,1) rotate(0.06deg);font-size:10.3px;line-height:13px;height:13px;color:#1264e3;-webkit-text-stroke:0.22px #1264e3;">Mykola</span>
<div class="r" style="left:523.90px;top:320.45px;width:63.20px;height:12.50px;background:#dcdfe4;border-radius:2.500px"></div>
<div class="r" style="left:592.90px;top:319.55px;width:61.20px;height:31.35px;background:#dcfff1;border-radius:2px"></div>
<span class="t" style="transform:translate(595.00px,323.08px) scale(0.8719,1) rotate(0.06deg);font-size:8.4px;line-height:11px;height:11px;color:#216e4e;font-weight:bold;-webkit-text-stroke:0.15px #216e4e;">READY TO</span>
<span class="t" style="transform:translate(595.00px,337.28px) scale(0.8595,1) rotate(0.06deg);font-size:8.4px;line-height:11px;height:11px;color:#216e4e;font-weight:bold;-webkit-text-stroke:0.15px #216e4e;">RELEASE</span>
<span class="t" style="transform:translate(672.81px,320.32px) scale(0.9300,1) rotate(0.06deg);font-size:10.4px;line-height:14px;height:14px;color:#42516c;">2</span>
<span class="t" style="transform:translate(699.31px,320.32px) scale(0.9300,1) rotate(0.06deg);font-size:10.4px;line-height:14px;height:14px;color:#42516c;">1</span>
<span class="t" style="transform:translate(737.39px,320.32px) scale(0.9300,1) rotate(0.06deg);font-size:10.4px;line-height:14px;height:14px;color:#42516c;">-</span>
<span class="t" style="transform:translate(784.71px,320.32px) scale(0.9300,1) rotate(0.06deg);font-size:10.4px;line-height:14px;height:14px;color:#42516c;">2</span>
<span class="t" style="transform:translate(826.51px,320.32px) scale(0.9300,1) rotate(0.06deg);font-size:10.4px;line-height:14px;height:14px;color:#42516c;">1</span>
<span class="t" style="transform:translate(865.81px,320.32px) scale(0.9300,1) rotate(0.06deg);font-size:10.4px;line-height:14px;height:14px;color:#42516c;">2</span>
<span class="t" style="transform:translate(906.31px,320.32px) scale(0.9300,1) rotate(0.06deg);font-size:10.4px;line-height:14px;height:14px;color:#42516c;">1</span>
<span class="t" style="transform:translate(946.71px,320.32px) scale(0.9300,1) rotate(0.06deg);font-size:10.4px;line-height:14px;height:14px;color:#42516c;">1</span>
<div class="r" style="left:357.20px;top:382.80px;width:606.00px;height:1.00px;background:#e6e8ec;"></div>
<svg class="r" style="left:363.85px;top:362.60px;" width="12" height="12" viewBox="-6 -6 12 12" fill="none"><g stroke-linecap="round" stroke-linejoin="round" fill="none"><rect x="-4.500" y="-4.500" width="9" height="9" rx="1.700" stroke="#5c98f5" stroke-width="0.950" fill="#fff"/><path d="M-2.700 0.500l1.800 1.600L2.400 -1.600" stroke="#4288f2" stroke-width="0.950"/></g></svg>
<span class="t" style="transform:translate(397.60px,363.88px) scale(0.9054,1) rotate(0.06deg);font-size:8.8px;line-height:11px;height:11px;color:#3f4e69;font-weight:bold;">SCL-2143</span>
<div class="r" style="left:469.60px;top:367.00px;width:8.50px;height:1.35px;background:#e6842f;border-radius:.5px"></div>
<div class="r" style="left:469.60px;top:370.00px;width:8.50px;height:1.35px;background:#e6842f;border-radius:.5px"></div>
<span class="t" style="transform:translate(493.00px,361.09px) scale(0.9025,1) rotate(0.06deg);font-size:10.3px;line-height:13px;height:13px;color:#1264e3;-webkit-text-stroke:0.22px #1264e3;">Vlad</span>
<div class="r" style="left:512.50px;top:361.60px;width:63.30px;height:12.50px;background:#dcdfe4;border-radius:2.500px"></div>
<div class="r" style="left:592.90px;top:361.20px;width:25.30px;height:17.10px;background:#dcfff1;border-radius:2px"></div>
<span class="t" style="transform:translate(595.00px,364.38px) scale(0.8679,1) rotate(0.06deg);font-size:8.4px;line-height:11px;height:11px;color:#216e4e;font-weight:bold;-webkit-text-stroke:0.15px #216e4e;">DONE</span>
<span class="t" style="transform:translate(672.81px,361.47px) scale(0.9300,1) rotate(0.06deg);font-size:10.4px;line-height:14px;height:14px;color:#42516c;">3</span>
<span class="t" style="transform:translate(699.31px,361.47px) scale(0.9300,1) rotate(0.06deg);font-size:10.4px;line-height:14px;height:14px;color:#42516c;">1</span>
<span class="t" style="transform:translate(737.39px,361.47px) scale(0.9300,1) rotate(0.06deg);font-size:10.4px;line-height:14px;height:14px;color:#42516c;">-</span>
<span class="t" style="transform:translate(784.71px,361.47px) scale(0.9300,1) rotate(0.06deg);font-size:10.4px;line-height:14px;height:14px;color:#42516c;">3</span>
<span class="t" style="transform:translate(826.51px,361.47px) scale(0.9300,1) rotate(0.06deg);font-size:10.4px;line-height:14px;height:14px;color:#42516c;">3</span>
<span class="t" style="transform:translate(865.81px,361.47px) scale(0.9300,1) rotate(0.06deg);font-size:10.4px;line-height:14px;height:14px;color:#42516c;">3</span>
<span class="t" style="transform:translate(906.31px,361.47px) scale(0.9300,1) rotate(0.06deg);font-size:10.4px;line-height:14px;height:14px;color:#42516c;">1</span>
<span class="t" style="transform:translate(946.71px,361.47px) scale(0.9300,1) rotate(0.06deg);font-size:10.4px;line-height:14px;height:14px;color:#42516c;">2</span>
<div class="r" style="left:357.20px;top:410.10px;width:606.00px;height:1.00px;background:#e6e8ec;"></div>
<svg class="r" style="left:363.85px;top:389.90px;" width="12" height="12" viewBox="-6 -6 12 12" fill="none"><g stroke="#ee4f43" stroke-width="1.050" stroke-linecap="round" fill="none"><rect x="-2" y="-2.300" width="4" height="6.300" rx="2"/><path d="M-1.350 -2.700a1.350 1.600 0 0 1 2.700 0"/><path d="M-2.400 0.300H-4.900M2.400 0.300H4.900M-2 -1.600L-4.300 -3.900M2 -1.600L4.300 -3.900M-2 2.200L-4.300 4.300M2 2.200L4.300 4.300"/></g></svg>
<span class="t" style="transform:translate(397.60px,391.18px) scale(0.9054,1) rotate(0.06deg);font-size:8.8px;line-height:11px;height:11px;color:#3f4e69;font-weight:bold;">SCL-2142</span>
<div class="r" style="left:469.60px;top:394.00px;width:8.50px;height:1.35px;background:#e6842f;border-radius:.5px"></div>
<div class="r" style="left:469.60px;top:397.00px;width:8.50px;height:1.35px;background:#e6842f;border-radius:.5px"></div>
<span class="t" style="transform:translate(493.00px,388.38px) scale(0.9198,1) rotate(0.06deg);font-size:10.3px;line-height:13px;height:13px;color:#1264e3;-webkit-text-stroke:0.22px #1264e3;">Mykola</span>
<div class="r" style="left:523.90px;top:388.90px;width:63.20px;height:12.50px;background:#dcdfe4;border-radius:2.500px"></div>
<div class="r" style="left:592.90px;top:388.50px;width:25.30px;height:17.10px;background:#dcfff1;border-radius:2px"></div>
<span class="t" style="transform:translate(595.00px,391.68px) scale(0.8679,1) rotate(0.06deg);font-size:8.4px;line-height:11px;height:11px;color:#216e4e;font-weight:bold;-webkit-text-stroke:0.15px #216e4e;">DONE</span>
<span class="t" style="transform:translate(673.89px,388.77px) scale(0.9300,1) rotate(0.06deg);font-size:10.4px;line-height:14px;height:14px;color:#42516c;">-</span>
<span class="t" style="transform:translate(699.31px,388.77px) scale(0.9300,1) rotate(0.06deg);font-size:10.4px;line-height:14px;height:14px;color:#42516c;">1</span>
<span class="t" style="transform:translate(737.39px,388.77px) scale(0.9300,1) rotate(0.06deg);font-size:10.4px;line-height:14px;height:14px;color:#42516c;">-</span>
<span class="t" style="transform:translate(784.71px,388.77px) scale(0.9300,1) rotate(0.06deg);font-size:10.4px;line-height:14px;height:14px;color:#42516c;">1</span>
<span class="t" style="transform:translate(826.51px,388.77px) scale(0.9300,1) rotate(0.06deg);font-size:10.4px;line-height:14px;height:14px;color:#42516c;">1</span>
<span class="t" style="transform:translate(865.81px,388.77px) scale(0.9300,1) rotate(0.06deg);font-size:10.4px;line-height:14px;height:14px;color:#42516c;">1</span>
<span class="t" style="transform:translate(906.31px,388.77px) scale(0.9300,1) rotate(0.06deg);font-size:10.4px;line-height:14px;height:14px;color:#42516c;">1</span>
<span class="t" style="transform:translate(946.71px,388.77px) scale(0.9300,1) rotate(0.06deg);font-size:10.4px;line-height:14px;height:14px;color:#42516c;">1</span>
<div class="r" style="left:357.20px;top:451.50px;width:606.00px;height:1.00px;background:#e6e8ec;"></div>
<svg class="r" style="left:363.85px;top:416.80px;" width="12" height="12" viewBox="-6 -6 12 12" fill="none"><g stroke-linecap="round" stroke-linejoin="round" fill="none"><rect x="-4.500" y="-4.500" width="9" height="9" rx="1.700" stroke="#5c98f5" stroke-width="0.950" fill="#fff"/><path d="M-2.700 0.500l1.800 1.600L2.400 -1.600" stroke="#4288f2" stroke-width="0.950"/></g></svg>
<span class="t" style="transform:translate(397.60px,418.08px) scale(0.9054,1) rotate(0.06deg);font-size:8.8px;line-height:11px;height:11px;color:#3f4e69;font-weight:bold;">SCL-2140</span>
<div class="r" style="left:469.60px;top:421.00px;width:8.50px;height:1.35px;background:#e6842f;border-radius:.5px"></div>
<div class="r" style="left:469.60px;top:424.00px;width:8.50px;height:1.35px;background:#e6842f;border-radius:.5px"></div>
<span class="t" style="transform:translate(493.00px,415.28px) scale(0.8954,1) rotate(0.06deg);font-size:10.3px;line-height:13px;height:13px;color:#1264e3;-webkit-text-stroke:0.22px #1264e3;">Kateryna</span>
<div class="r" style="left:530.80px;top:415.80px;width:56.30px;height:12.50px;background:#dcdfe4;border-radius:2.500px"></div>
<div class="r" style="left:592.90px;top:414.90px;width:61.20px;height:31.35px;background:#dcfff1;border-radius:2px"></div>
<span class="t" style="transform:translate(595.00px,418.43px) scale(0.8719,1) rotate(0.06deg);font-size:8.4px;line-height:11px;height:11px;color:#216e4e;font-weight:bold;-webkit-text-stroke:0.15px #216e4e;">READY TO</span>
<span class="t" style="transform:translate(595.00px,432.63px) scale(0.8595,1) rotate(0.06deg);font-size:8.4px;line-height:11px;height:11px;color:#216e4e;font-weight:bold;-webkit-text-stroke:0.15px #216e4e;">RELEASE</span>
<span class="t" style="transform:translate(672.81px,415.67px) scale(0.9300,1) rotate(0.06deg);font-size:10.4px;line-height:14px;height:14px;color:#42516c;">1</span>
<span class="t" style="transform:translate(699.31px,415.67px) scale(0.9300,1) rotate(0.06deg);font-size:10.4px;line-height:14px;height:14px;color:#42516c;">1</span>
<span class="t" style="transform:translate(737.39px,415.67px) scale(0.9300,1) rotate(0.06deg);font-size:10.4px;line-height:14px;height:14px;color:#42516c;">-</span>
<span class="t" style="transform:translate(785.79px,415.67px) scale(0.9300,1) rotate(0.06deg);font-size:10.4px;line-height:14px;height:14px;color:#42516c;">-</span>
<span class="t" style="transform:translate(827.59px,415.67px) scale(0.9300,1) rotate(0.06deg);font-size:10.4px;line-height:14px;height:14px;color:#42516c;">-</span>
<span class="t" style="transform:translate(865.81px,415.67px) scale(0.9300,1) rotate(0.06deg);font-size:10.4px;line-height:14px;height:14px;color:#42516c;">2</span>
<span class="t" style="transform:translate(906.31px,415.67px) scale(0.9300,1) rotate(0.06deg);font-size:10.4px;line-height:14px;height:14px;color:#42516c;">1</span>
<span class="t" style="transform:translate(946.71px,415.67px) scale(0.9300,1) rotate(0.06deg);font-size:10.4px;line-height:14px;height:14px;color:#42516c;">2</span>
</div></div>
<div class="r" style="left:966.40px;top:129.40px;width:4.60px;height:240.60px;background:#dcdfe4;border-radius:2.300px"></div>
<div class="r" style="left:359.00px;top:438.10px;width:538.90px;height:6.70px;background:#dcdfe4;border-radius:3.400px"></div>
<div class="r" style="left:0.00px;top:0.00px;width:998.00px;height:1.00px;background:#d9dce3;"></div>
<div class="r" style="left:0.00px;top:1.00px;width:998.00px;height:1.00px;background:rgba(217,220,227,.22);"></div>
<div class="r" style="left:0.00px;top:0.00px;width:1.00px;height:456.00px;background:#dadde4;"></div>
<div class="r" style="left:1.00px;top:0.00px;width:1.00px;height:456.00px;background:rgba(217,220,227,.22);"></div>
<div class="r" style="left:997.00px;top:0.00px;width:1.00px;height:456.00px;background:#dcdfe6;"></div>
<div class="r" style="left:996.00px;top:0.00px;width:1.00px;height:456.00px;background:rgba(217,220,227,.18);"></div>
<div class="r" style="left:0.00px;top:455.00px;width:998.00px;height:1.00px;background:#dadde4;"></div>
<div class="r" style="left:0.00px;top:454.00px;width:998.00px;height:1.00px;background:rgba(217,220,227,.55);"></div>
</body></html>
